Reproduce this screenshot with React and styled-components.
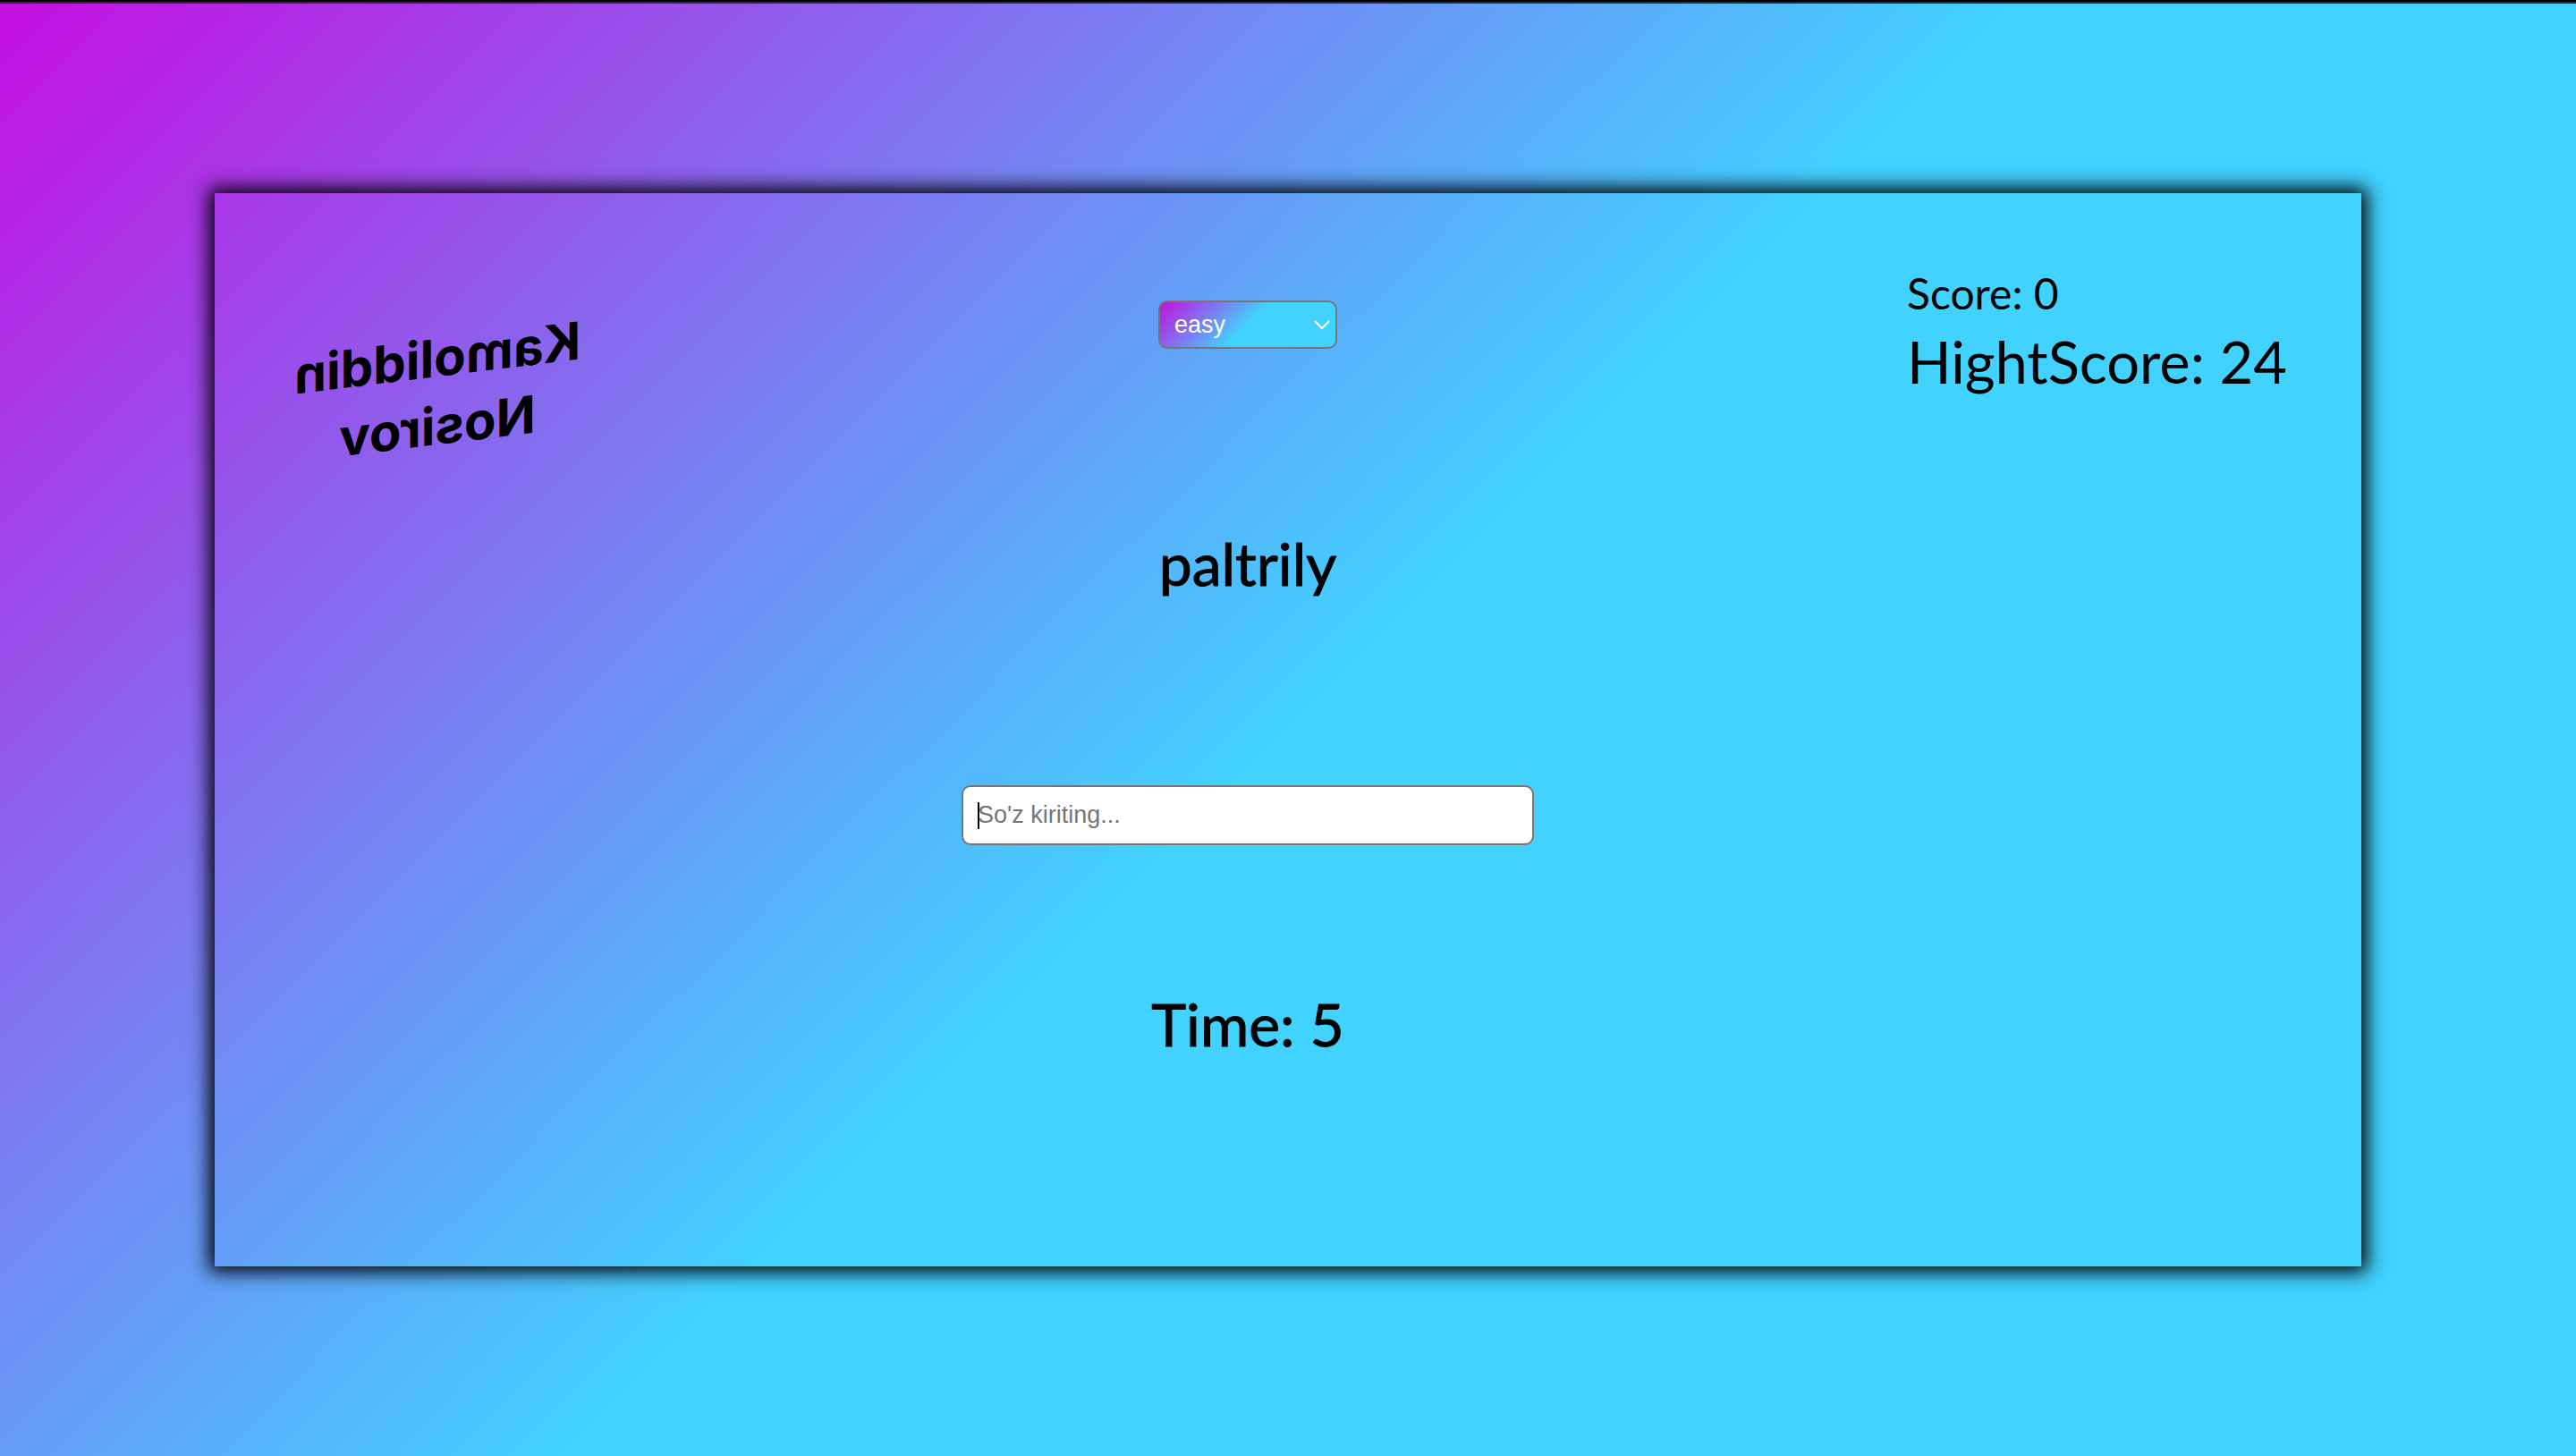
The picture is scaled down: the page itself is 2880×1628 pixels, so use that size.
import React from "react";
import styled, { createGlobalStyle } from "styled-components";

const gradient = "linear-gradient(135deg, #c40fe0 0%, #41d2ff 50%)";

const GlobalStyle = createGlobalStyle`
  * { box-sizing: border-box; }
  body { margin: 0; font-family: Lato, sans-serif; color: #000; }
`;

const Page = styled.div`
  min-height: 100vh;
  display: flex;
  flex-direction: column;
  background: #2e2e2e;
  border-top: 2px solid #000;
  padding-top: 2px;
`;

const Stage = styled.main`
  flex: 1;
  display: flex;
  align-items: center;
  justify-content: center;
  padding: 80px 240px;
  background: ${gradient};
`;

const Panel = styled.section`
  flex: 1;
  min-height: 1200px;
  display: flex;
  align-items: flex-start;
  justify-content: space-between;
  padding: 80px;
  box-shadow: 0 0 20px 6px #000;
`;

const Author = styled.h1`
  width: 338px;
  margin: 66px 0 0;
  font-family: Inter, sans-serif;
  font-size: 58px;
  line-height: 76px;
  font-weight: 700;
  text-align: center;
  transform: scaleX(-1) skewY(7deg);
`;

const Game = styled.div`
  width: 640px;
  padding-top: 40px;
  display: flex;
  flex-direction: column;
  align-items: center;
`;

const LevelField = styled.div`
  position: relative;
  width: 200px;
  height: 54px;
`;

const LevelSelect = styled.select`
  appearance: none;
  width: 100%;
  height: 100%;
  padding: 0 16px;
  border: 2px solid #767676;
  border-radius: 10px;
  background: ${gradient};
  color: #fff;
  font: 27px "Liberation Sans", Arial, sans-serif;
  outline: none;
`;

const Chevron = styled.svg`
  position: absolute;
  right: 8px;
  top: 21px;
  width: 18px;
  height: 12px;
  pointer-events: none;
`;

const Line = styled.p`
  margin: ${(p) => p.$top || 0}px 0 0;
  font-size: ${(p) => (p.$small ? 48 : p.$strong ? 66 : 65)}px;
  line-height: ${(p) => (p.$small ? 64 : 88)}px;
  -webkit-text-stroke: ${(p) => (p.$strong ? "1px" : "0")} #000;
  white-space: nowrap;
`;

const AnswerField = styled.div`
  position: relative;
  width: 100%;
  margin-top: 204px;
`;

const AnswerInput = styled.input`
  display: block;
  width: 100%;
  height: 67px;
  padding: 0 16px;
  border: 2px solid #767676;
  border-radius: 10px;
  background: #fff;
  font: 27px "Liberation Sans", Arial, sans-serif;
  caret-color: transparent;
  outline: none;
  &::placeholder { color: #757575; }
`;

const Caret = styled.span`
  position: absolute;
  left: 18px;
  top: 19px;
  width: 2px;
  height: 30px;
  background: #000;
`;

const Scores = styled.div`
  width: 428px;
`;

export default function App() {
  return (
    <Page>
      <GlobalStyle />
      <Stage>
        <Panel>
          <Author>Kamoliddin Nosirov</Author>
          <Game>
            <LevelField>
              <LevelSelect aria-label="Level" defaultValue="easy">
                <option value="easy">easy</option>
                <option value="medium">medium</option>
                <option value="hard">hard</option>
              </LevelSelect>
              <Chevron viewBox="0 0 18 12" aria-hidden="true">
                <path d="M1 2l8 8 8-8" fill="none" stroke="#fff" strokeWidth="2" />
              </Chevron>
            </LevelField>
            <Line $top={196} $strong>paltrily</Line>
            <AnswerField>
              <AnswerInput type="text" aria-label="So'z" placeholder="So'z kiriting..." />
              <Caret />
            </AnswerField>
            <Line $top={156} $strong>Time: 5</Line>
          </Game>
          <Scores>
            <Line $small>Score: 0</Line>
            <Line>HightScore: 24</Line>
          </Scores>
        </Panel>
      </Stage>
    </Page>
  );
}
